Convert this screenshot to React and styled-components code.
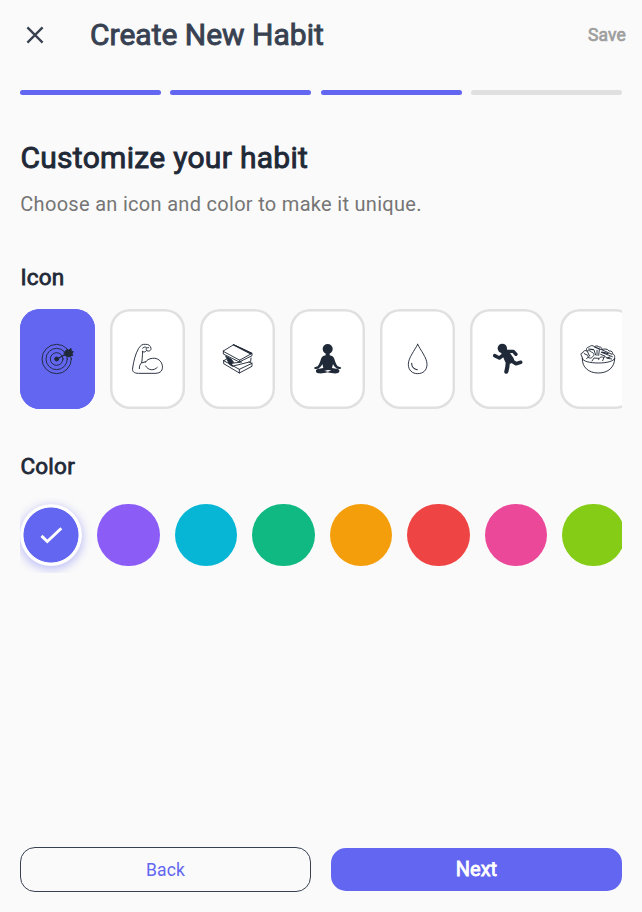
import React from "react";
import styled, { createGlobalStyle } from "styled-components";

const GlobalStyle = createGlobalStyle`
  * { box-sizing: border-box; }
  body { margin: 0; background: #fafafa; font-family: Roboto, "Liberation Sans", sans-serif; }
  button { font-family: inherit; padding: 0; cursor: pointer; }
`;

const Screen = styled.div`
  width: 642px;
  height: 912px;
  display: flex;
  flex-direction: column;
  background: #fafafa;
  color: #1f2937;
  overflow: hidden;
`;

const AppBar = styled.header`
  height: 70px;
  flex: none;
  display: flex;
  align-items: center;
  padding: 0 16px 0 20px;
`;

const CloseButton = styled.button`
  display: flex;
  width: 30px;
  height: 30px;
  margin-right: 40px;
  border: 0;
  background: none;
`;

const AppTitle = styled.h1`
  margin: 0;
  flex: 1;
  font-size: 30px;
  line-height: 38px;
  font-weight: 400;
  letter-spacing: 0;
  color: #374151;
  -webkit-text-stroke: 0.9px #374151;
`;

const SaveButton = styled.button`
  border: 0;
  background: none;
  font-size: 17.5px;
  line-height: 24px;
  color: #9e9e9e;
  letter-spacing: 0.12px;
  -webkit-text-stroke: 0.7px #9e9e9e;
`;

const Progress = styled.div`
  display: flex;
  flex: none;
  padding: 20px 20px 0;
`;

const Step = styled.div`
  flex: 1;
  height: 5px;
  &::before {
    content: "";
    display: block;
    height: 5px;
    margin-left: -0.1px;
    margin-right: ${(p) => (p.$last ? 0 : 10)}px;
    border-radius: 2.5px;
    background: ${(p) => (p.$done ? "#6366f1" : "#e0e0e0")};
  }
`;

const Content = styled.main`
  flex: 1;
  min-height: 0;
  padding: 43px 20px 0;
`;

const Heading = styled.h2`
  margin: 0;
  padding-left: 0.4px;
  font-size: 30px;
  line-height: 40px;
  font-weight: 400;
  letter-spacing: 0.3px;
  -webkit-text-stroke: 0.9px #1f2937;
`;

const Description = styled.p`
  margin: 11px 0 0;
  padding-left: 0.3px;
  font-size: 20px;
  line-height: 30px;
  letter-spacing: 0.3px;
  color: #757575;
`;

const Label = styled.h3`
  margin: ${(p) => p.$top}px 0 0;
  padding-left: 0.4px;
  font-size: 22.5px;
  line-height: 30px;
  font-weight: 400;
  letter-spacing: 0.25px;
  -webkit-text-stroke: 0.8px #1f2937;
`;

const IconList = styled.div`
  display: flex;
  gap: 15px;
  height: 100px;
  margin-top: 17px;
  overflow: hidden;
`;

const IconTile = styled.button`
  flex: none;
  display: flex;
  align-items: center;
  justify-content: center;
  width: 75px;
  height: 100px;
  border: 0;
  border-radius: 20px;
  color: #1f2937;
  background: ${(p) => (p.$selected ? "#6366f1" : "#ffffff")};
  box-shadow: inset 0 0 0 2.5px ${(p) => (p.$selected ? "#6366f1" : "#e0e0e0")};
`;

const Glyph = styled.svg`
  flex: none;
  width: 55px;
  height: 48px;
  fill: none;
  stroke: currentColor;
  stroke-width: 2.8;
  stroke-linecap: round;
  stroke-linejoin: round;
`;

const ColorList = styled.div`
  display: flex;
  align-items: center;
  gap: 14.98px;
  height: 75px;
  margin-top: 16.5px;
  overflow: hidden;
`;

const Swatch = styled.button`
  flex: none;
  display: flex;
  align-items: center;
  justify-content: center;
  width: 62.5px;
  height: 62.5px;
  border: 0;
  border-radius: 50%;
  background: ${(p) => p.$color};
`;

const SelectedSwatch = styled(Swatch)`
  width: 62.48px;
  background: radial-gradient(circle, ${(p) => p.$color} 27.1px, #ffffff 27.9px 30.3px, #e4e4fb 31px);
  box-shadow: 0 2.5px 10px 1px rgba(99, 102, 241, 0.4);
`;

const Footer = styled.footer`
  display: grid;
  grid-template-columns: 291px 291px;
  flex: none;
  gap: 20px;
  padding: 0 20px 20px;
`;

const FooterButton = styled.button`
  height: 45px;
  border-radius: 15px;
  line-height: 28px;
`;

const BackButton = styled(FooterButton)`
  border: 1.25px solid #374151;
  background: transparent;
  font-size: 17.5px;
  letter-spacing: 0.12px;
  color: #6366f1;
`;

const NextButton = styled(FooterButton)`
  height: 43.5px;
  margin-top: 0.75px;
  padding-bottom: 2px;
  border: 0;
  background: #6366f1;
  font-size: 20px;
  color: #ffffff;
  -webkit-text-stroke: 0.8px #ffffff;
`;

const Target = () => (
  <Glyph viewBox="0 0 165 144">
    <circle cx="80" cy="72" r="44" />
    <circle cx="80" cy="72" r="32" />
    <circle cx="80" cy="72" r="19" />
    <circle cx="80" cy="72" r="6" fill="currentColor" />
    <path d="M80 72L110 57" strokeWidth="4" />
    <path d="M104 51l8-9 4 4 7-6 1 9 6 1-4 6 3 5-8 1-3 4-10-4-5-2z" fill="currentColor" />
  </Glyph>
);

const Biceps = () => (
  <Glyph viewBox="0 0 165 144">
    <path d="M67 49c4 4 10 2 13-3 5 5 14 1 13-6-1-8-8-13-17-12-9-1-14 3-20 12-10 17-15 38-18 59-2 11 4 16 18 16h49c18 0 24-10 22-23-2-14-14-24-30-22-10 1-17 5-21 12" />
    <path d="M68 49c-1 13-1 22-3 35l12-4M58 101c0-8 2-14 7-18M77 93c8 14 25 15 35 4M68 40c2-4 6-5 11-3M80 46c-4-5-1-9 6-8" />
  </Glyph>
);

const Books = () => (
  <Glyph viewBox="0 0 165 144">
    <path d="M40 48l31-19 55 26-36 20zM40 48v9l48 24 38-19v-7M89 75v6" />
    <path d="M41 77l8-4M41 77v9l47 28 38-20v-9l-9-4M41 77l47 26 38-18M88 103v11M65 85l1 9 56-14 1-11M65 85l30-4" />
    <path d="M71 29l55 26-4 2-52-27z" fill="currentColor" />
    <path d="M48 64l15 8 8 10-7 3v7l-6-5z" fill="currentColor" />
  </Glyph>
);

const Meditation = () => (
  <Glyph viewBox="0 0 165 144">
    <g fill="currentColor" stroke="none">
      <circle cx="83" cy="42" r="15" />
      <path d="M77 54h12v7c8 2 12 5 14 11 3 9 5 16 10 22l9 3c3 2 1 5-2 5l-9-1c-6-4-10-9-12-14l-2 8-1 4 16 3c9 0 8 12-1 13-10 1-19-1-28-3-9 2-18 4-28 3-9-1-10-13-1-13l16-3-1-4-2-8c-2 5-6 10-12 14l-9 1c-3 0-5-3-2-5l9-3c5-6 7-13 10-22 2-6 6-9 14-11z" />
    </g>
    <path d="M73 108l10-3 11 1-10 4z" fill="white" stroke="none" />
  </Glyph>
);

const Droplet = () => (
  <Glyph viewBox="0 0 165 144">
    <path d="M83 28C75 45 55 68 55 88c0 18 12 28 28 28s28-10 28-28c0-20-20-43-28-60z" />
    <path d="M65 85c0 10 7 18 17 19" strokeWidth="3.2" />
  </Glyph>
);

const Runner = () => (
  <Glyph viewBox="0 0 165 144">
    <circle cx="67" cy="40" r="14" fill="currentColor" stroke="none" />
    <path d="M76 54l14 20" strokeWidth="23" />
    <path d="M70 60l-12 9-14-7" strokeWidth="10.5" />
    <path d="M80 49h20l8 9" strokeWidth="10" />
    <path d="M94 77l14 9 14-4" strokeWidth="11" />
    <path d="M84 77l-2 19-3 14" strokeWidth="12.5" />
    <path d="M69 61l8 20 14-2-8-20z" fill="currentColor" />
  </Glyph>
);

const Salad = () => (
  <Glyph viewBox="0 0 165 144">
    <path d="M37 71c-1 25 18 43 48 43s49-18 49-43" />
    <path d="M37 71c2 8 23 13 48 13s45-5 49-13M38 71l-3-8c-4-4-2-10 4-10 1-6 7-8 12-5M51 48c-4-6-1-12 7-12 3-6 11-5 15-1 5-4 12-2 14 1 7-1 10 4 8 8 8-4 19-2 22 4 9-1 12 4 10 8 8 3 8 10 6 15" />
    <path d="M52 48c6-3 11 0 13 4 7 1 9 8 4 12-3 6-11 7-16 2M43 56l10 5M53 51l5 11M59 62l-9 9M72 45l5 15M81 46v15M88 45l-2 16M95 44l31 14M94 52l33 13M92 58l12 5M66 78l6-9 14 1M86 74c1-8 8-9 14-7 4-4 10-1 12 3l13 2M98 77l4-10" strokeWidth="2.8" />
    <path d="M56 42l14 2M74 36l17 7M96 51l18 5M111 69l9-3" strokeWidth="3.6" />
  </Glyph>
);

const habitIcons = [
  ["target", Target],
  ["strength", Biceps],
  ["reading", Books],
  ["meditation", Meditation],
  ["water", Droplet],
  ["running", Runner],
  ["nutrition", Salad],
];

const colors = ["#8b5cf6", "#06b6d4", "#10b981", "#f59e0b", "#ef4444", "#ec4899", "#84cc16"];

export default function App() {
  return (
    <Screen>
      <GlobalStyle />
      <AppBar>
        <CloseButton aria-label="Close">
          <svg width="30" height="30" viewBox="0 0 30 30" fill="none" stroke="#374151" strokeWidth="2.3">
            <path d="M7.4 7.4l15.2 15.2M22.6 7.4L7.4 22.6" />
          </svg>
        </CloseButton>
        <AppTitle>Create New Habit</AppTitle>
        <SaveButton>Save</SaveButton>
      </AppBar>
      <Progress>
        <Step $done />
        <Step $done />
        <Step $done />
        <Step $last />
      </Progress>
      <Content>
        <Heading>Customize your habit</Heading>
        <Description>Choose an icon and color to make it unique.</Description>
        <Label $top={43}>Icon</Label>
        <IconList>
          {habitIcons.map(([name, Icon], i) => (
            <IconTile key={name} aria-label={name} $selected={i === 0}>
              <Icon />
            </IconTile>
          ))}
        </IconList>
        <Label $top={42}>Color</Label>
        <ColorList>
          <SelectedSwatch $color="#6366f1" aria-label="Selected color">
            <svg width="30" height="30" viewBox="0 0 30 30" fill="none" stroke="#ffffff" strokeWidth="2.9">
              <path d="M5.5 15.9l5.8 5.7L25.3 8.2" />
            </svg>
          </SelectedSwatch>
          {colors.map((color) => (
            <Swatch key={color} $color={color} aria-label={color} />
          ))}
        </ColorList>
      </Content>
      <Footer>
        <BackButton>Back</BackButton>
        <NextButton>Next</NextButton>
      </Footer>
    </Screen>
  );
}
